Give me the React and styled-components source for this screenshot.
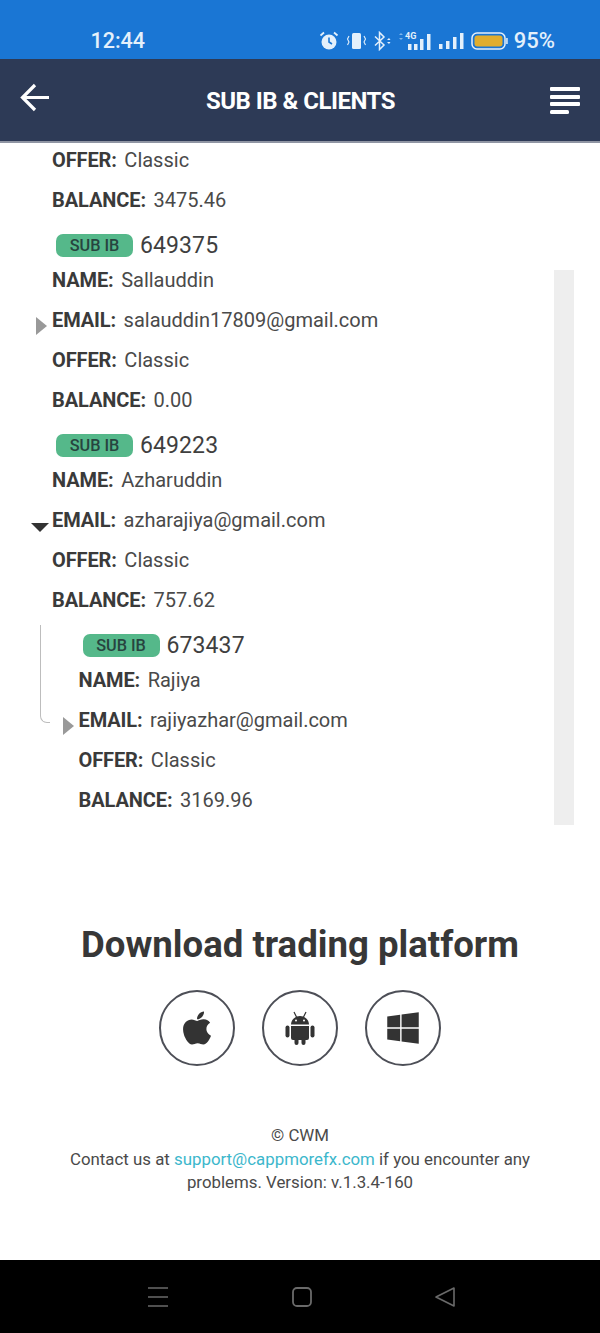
import React from "react";
import styled, { createGlobalStyle } from "styled-components";
import { FaApple, FaWindows } from "react-icons/fa";

const Global = createGlobalStyle`
  html, body { margin: 0; padding: 0; background: #fff; }
  * { box-sizing: border-box; }
`;
const Page = styled.div`
  width: 600px; height: 1333px; display: flex; flex-direction: column; overflow: hidden;
  font-family: Roboto, "Liberation Sans", sans-serif; color: #3a3a3a; background: #fff;
`;
const StatusBar = styled.div`
  height: 59px; background: #1a76d4; color: #e4f0fb; display: flex; align-items: center;
  padding: 22px 45px 0 90.5px; justify-content: space-between; flex: none;
`;
const Clock = styled.span`font-size: 21.5px; font-weight: 500;`;
const StatusIcons = styled.div`display: flex; align-items: center; gap: 7px;`;
const Percent = styled.span`font-size: 22px; font-weight: 500; margin-left: -1px;`;
const AppBar = styled.header`
  height: 84px; flex: none; background: #2d3a56; border-bottom: 2px solid #8f95a3;
  display: flex; align-items: center; justify-content: space-between; padding: 0 18px 0 20px; color: #fff;
`;
const Title = styled.h1`margin: 0 1px 0 0; font-size: 24px; font-weight: 700; letter-spacing: -0.5px; padding-top: 2px;`;
const IconButton = styled.div`display: flex; width: 32px; height: 32px; margin-top: ${p => p.$top || 0}px;`;
const Main = styled.main`flex: 1; position: relative; overflow: hidden; min-height: 0; display: flex; flex-direction: column;`;
const Tree = styled.div`margin-top: -3px; padding-left: 52px; height: 700px; flex: none;`;
const Block = styled.div`position: relative;`;
const Nested = styled.div`position: relative; padding-left: 26.5px;`;
const Branch = styled.div`
  position: absolute; left: -12px; top: -5px; width: 10px; height: 98px;
  border-left: 1.5px solid #bdbdbd; border-bottom: 1.5px solid #bdbdbd; border-bottom-left-radius: 7px;
`;
const Head = styled.div`height: 30px; margin-top: 10px; display: flex; align-items: center; padding-left: 4px;`;
const Badge = styled.span`
  width: 77px; height: 23px; border-radius: 7px; background: #55b88a; color: #27443f;
  font-size: 16.3px; font-weight: 500; display: flex; align-items: center; justify-content: center; margin-right: 7px;
`;
const Account = styled.span`font-size: 23px; letter-spacing: 0.1px; color: #3f3f3f;`;
const Row = styled.div`height: 40px; display: flex; align-items: center; font-size: 20px; position: relative; white-space: pre; color: #4a4a4a;`;
const Key = styled.b`font-weight: 700; color: #3a3a3a; letter-spacing: -0.1px; margin-right: 7.5px;`;
const RightCaret = styled.i`
  position: absolute; left: -16px; top: 17px; width: 0; height: 0;
  border-left: 11px solid #999; border-top: 9px solid transparent; border-bottom: 9px solid transparent;
`;
const DownCaret = styled.i`
  position: absolute; left: -21px; top: 23px; width: 0; height: 0;
  border-top: 9px solid #333; border-left: 9px solid transparent; border-right: 9px solid transparent;
`;
const Scrollbar = styled.div`position: absolute; left: 554px; top: 127px; width: 20px; height: 555px; background: #eeeeee;`;
const Footer = styled.section`display: flex; flex-direction: column; align-items: center; flex: 1;`;
const Heading = styled.h2`margin: 75px 0 0; font-size: 36.6px; line-height: 60px; font-weight: 700; color: #373737;`;
const Stores = styled.div`display: flex; gap: 27px; margin-top: 15px;`;
const Store = styled.div`
  width: 76px; height: 76px; border: 2px solid #4d4f57; border-radius: 50%; color: #333;
  display: flex; align-items: center; justify-content: center; font-size: ${p => p.$size || 36}px;
`;
const Legal = styled.p`
  width: 480px; margin: 58px 0 0; font-size: 16.85px; line-height: 23.5px; text-align: center; color: #4a4a4a;
`;
const Mail = styled.a`color: #3cb7cc; text-decoration: none;`;
const NavBar = styled.nav`
  height: 73px; flex: none; background: #000; display: flex; align-items: center; justify-content: space-between;
  padding: 0 144px 0 147px;
`;

const Field = ({ k, v, caret }) => (
  <Row>{caret}<Key>{k}:</Key>{v}</Row>
);
const Client = ({ id, name, email, balance, caret, children }) => (
  <Block>
    <Head><Badge>SUB IB</Badge><Account>{id}</Account></Head>
    <Field k="NAME" v={name} />
    <Field k="EMAIL" v={email} caret={caret} />
    <Field k="OFFER" v="Classic" />
    <Field k="BALANCE" v={balance} />
    {children}
  </Block>
);

export default function App() {
  return (
    <Page>
      <Global />
      <StatusBar>
        <Clock>12:44</Clock>
        <StatusIcons>
          <svg width="20" height="20" viewBox="0 0 20 20"><circle cx="9" cy="11" r="7.500" fill="#e4f0fb"/><path d="M9 6.500V11l3 2" stroke="#1a76d4" strokeWidth="1.600" fill="none"/><path d="M.5 4.500L4 1.500M17.500 4.500L14 1.500" stroke="#e4f0fb" strokeWidth="1.800"/></svg>
          <svg width="20" height="20" viewBox="0 0 20 20"><rect x="5" y="2" width="9" height="16" rx="1.500" fill="#e4f0fb"/><path d="M2 5L.5 8 2 11 .5 14M17 5l1.500 3-1.500 3 1.500 3" stroke="#e4f0fb" strokeWidth="1.100" fill="none"/></svg>
          <svg width="18" height="20" viewBox="0 0 18 20"><path d="M1 5.500l9 8.500-4.500 4.500V1.500L10 6 1 14.500" stroke="#e4f0fb" strokeWidth="1.500" fill="none"/><path d="M13 9l2-2 1.500 2zM13 11l2 2 1.500-2z" fill="#e4f0fb"/></svg>
          <svg width="33" height="22" viewBox="0 0 33 22"><path d="M0 5l2-2 2 2zM0 8l2 2 2-2z" fill="#7fb5ea"/><text x="6" y="9" fontSize="9" fontWeight="700" fill="#e4f0fb" fontFamily="Roboto">4G</text><rect x="9" y="14" width="3.500" height="6" fill="#e4f0fb"/><rect x="15" y="14" width="3.500" height="6" fill="#e4f0fb"/><rect x="21" y="9" width="3.500" height="11" fill="#e4f0fb"/><rect x="28" y="4" width="3.500" height="16" fill="#e4f0fb"/></svg>
          <svg width="25" height="20" viewBox="0 0 25 20"><rect x="0" y="13" width="3.500" height="5" fill="#e4f0fb"/><rect x="7" y="10" width="3.500" height="8" fill="#e4f0fb"/><rect x="14" y="6" width="3.500" height="12" fill="#e4f0fb"/><rect x="21" y="2" width="3.500" height="16" fill="#e4f0fb"/></svg>
          <svg width="37" height="20" viewBox="0 0 37 20"><rect x="1" y="2" width="33" height="16" rx="5" fill="none" stroke="#e4f0fb" strokeWidth="1.500"/><rect x="3.500" y="4.500" width="28" height="11" rx="3" fill="#e0ad2e"/><rect x="35.200" y="7" width="1.500" height="6" fill="#e4f0fb"/></svg>
          <Percent>95%</Percent>
        </StatusIcons>
      </StatusBar>
      <AppBar>
        <IconButton $top={-5}>
          <svg width="32" height="32" viewBox="0 0 32 32"><path d="M29 15.500H3M15 3L2.500 15.500 15 28" stroke="#fff" strokeWidth="3.200" fill="none"/></svg>
        </IconButton>
        <Title>SUB IB &amp; CLIENTS</Title>
        <IconButton>
          <svg width="32" height="32" viewBox="0 0 32 32"><g fill="#fff"><rect x="0" y="3" width="30" height="4" rx="1"/><rect x="0" y="11" width="30" height="4" rx="1"/><rect x="0" y="18" width="30" height="4" rx="1"/><rect x="0" y="26" width="19" height="4" rx="1.500"/></g></svg>
        </IconButton>
      </AppBar>
      <Main>
        <Tree>
          <Field k="OFFER" v="Classic" />
          <Field k="BALANCE" v="3475.46" />
          <Client id="649375" name="Sallauddin" email="salauddin17809@gmail.com" balance="0.00" caret={<RightCaret />} />
          <Client id="649223" name="Azharuddin" email="azharajiya@gmail.com" balance="757.62" caret={<DownCaret />}>
            <Nested>
              <Branch />
              <Client id="673437" name="Rajiya" email="rajiyazhar@gmail.com" balance="3169.96" caret={<RightCaret />} />
            </Nested>
          </Client>
        </Tree>
        <Scrollbar />
        <Footer>
          <Heading>Download trading platform</Heading>
          <Stores>
            <Store $size={38}><FaApple /></Store>
            <Store>
              <svg width="30" height="34" viewBox="0 0 30 34" fill="#333">
                <path d="M6 13.500C6 9.500 9.500 5 15 5s9 4.500 9 8.500z" />
                <path d="M9 1l2.500 5M21 1l-2.500 5" stroke="#333" strokeWidth="1.200" />
                <circle cx="11" cy="9.500" r="1" fill="#fff" />
                <circle cx="19" cy="9.500" r="1" fill="#fff" />
                <path d="M6 15h18v12a2 2 0 0 1-2 2H8a2 2 0 0 1-2-2z" />
                <rect x="0.500" y="14.500" width="4" height="12" rx="2" />
                <rect x="25.500" y="14.500" width="4" height="12" rx="2" />
                <rect x="9.500" y="26" width="4" height="8" rx="2" />
                <rect x="16.500" y="26" width="4" height="8" rx="2" />
              </svg>
            </Store>
            <Store><FaWindows /></Store>
          </Stores>
          <Legal>© CWM<br />Contact us at <Mail>support@cappmorefx.com</Mail> if you encounter any problems. Version: v.1.3.4-160</Legal>
        </Footer>
      </Main>
      <NavBar>
        <svg width="22" height="22" viewBox="0 0 22 22"><path d="M1 2h20M1 11h20M1 20h20" stroke="#6a6a6a" strokeWidth="1.500"/></svg>
        <svg width="22" height="22" viewBox="0 0 22 22"><rect x="2" y="2" width="18" height="18" rx="4" fill="none" stroke="#6a6a6a" strokeWidth="1.800"/></svg>
        <svg width="22" height="22" viewBox="0 0 22 22"><path d="M20 2v18L2 11z" fill="none" stroke="#6a6a6a" strokeWidth="1.600" strokeLinejoin="round"/></svg>
      </NavBar>
    </Page>
  );
}
